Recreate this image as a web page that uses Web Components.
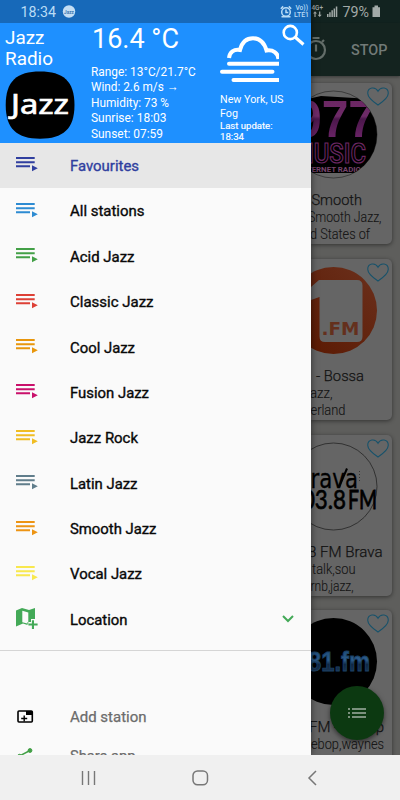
<!DOCTYPE html>
<html lang="en"><head><meta charset="utf-8"><title>Jazz Radio</title>
<style>html,body{margin:0;height:100%;overflow:hidden}body{font-family:Roboto,"Liberation Sans",sans-serif;width:400px;height:800px}</style></head>
<body><radio-app></radio-app>
<script>
const define=(name,css,html)=>customElements.define(name,class extends HTMLElement{
  constructor(){super();this.attachShadow({mode:'open'});}
  connectedCallback(){
    const t=document.createElement('template');
    t.innerHTML=`<style>*{box-sizing:border-box}svg{display:block;overflow:visible}${css}</style>`+(typeof html==='function'?html(this):html);
    this.shadowRoot.replaceChildren(t.content.cloneNode(true));
  }
});

/* A line of text stretched to a given advance width */
define('fit-text',':host{display:block;line-height:0}text{fill:currentColor;stroke:currentColor}',
 e=>{const s=+e.getAttribute('size'),w=e.getAttribute('w'),h=e.getAttribute('h')||Math.round(s*1.2);
 return `<svg width="${w}" height="${h}"><text x="0" y="${h*.78}" font-size="${s}" stroke-width="${e.getAttribute('heft')||0}" textLength="${w}" lengthAdjust="spacingAndGlyphs">${e.textContent}</text></svg>`});

define('status-left',`:host{display:block;height:23px;background:#1769b9;color:#b9dcf6}`,
 `<svg width="311" height="23" fill="currentColor"><text x="20.500" y="17" font-size="14.300" textLength="35.500" lengthAdjust="spacingAndGlyphs">18:34</text>
 <circle cx="69" cy="11.500" r="6.200" fill="#c4def4"/><text x="64" y="13.600" font-size="5.500" font-weight="700" fill="#3d79b3" textLength="10" lengthAdjust="spacingAndGlyphs">Jazz</text>
 <g fill="none" stroke="#b9dcf6" stroke-width="1.500"><circle cx="286" cy="12" r="4.300"/><path d="M286 9.500v3h2.300M280.800 8.800l2.400-2.400M291.200 8.800l-2.400-2.400M281.500 16.700h9"/></g>
 <text x="295.500" y="9.500" font-size="6.800" font-weight="500" textLength="12.500" lengthAdjust="spacingAndGlyphs">Vo))</text><text x="294" y="17" font-size="7" font-weight="500" textLength="15" lengthAdjust="spacingAndGlyphs">LTE1</text></svg>`);

define('status-right',`:host{display:block;height:23px;background:#122320;color:#a3aaa8}`,
 `<svg width="89" height="23" fill="currentColor"><text x=".5" y="10" font-size="7" font-weight="500" textLength="11.500" lengthAdjust="spacingAndGlyphs">4G+</text>
 <path d="M4 11.200l2 2.300H4.600V17H3.400v-3.500H2zM8.700 17l-2-2.300h1.400v-3.300h1.200v3.300h1.400zM16 14h1.500v3H16zM18.200 12.200h1.500V17h-1.500zM20.400 10.200h1.500V17h-1.500zM22.600 8.400h1.500V17h-1.500zM24.800 6.600h1.500V17h-1.500z"/>
 <text x="31.500" y="17" font-size="14.300" textLength="26.500" lengthAdjust="spacingAndGlyphs">79%</text><path d="M61.500 7.300h2V5.500h3.500v1.800h2V17h-7.500z"/></svg>`);

define('weather-header',`:host{display:grid;grid-template-columns:91px 129px 91px;height:120px;background:#1e90ff;color:#fff}
 .a{padding:3px 0 0 5px}.b{padding:1px 0 0 0}.b>fit-text{padding-left:1px}.c{padding-top:2px}.rows{padding-top:9.500px}.rows fit-text{margin-bottom:1.500px}.logo{margin-top:1.500px}.place{padding-top:8.500px}`,
 `<div class="a"><fit-text size="18.800" w="39.500" h="22.500">Jazz</fit-text><fit-text size="18.800" w="48" h="21">Radio</fit-text>
 <div class="logo"><svg width="70" height="69"><path d="M35 .5C58 .5 69.500 10 69.500 34S58 67.700 35 67.700.7 58 .7 34 12 .5 35 .5z" fill="#000"/><text x="6" y="43" font-family="Noto Sans" font-size="28" fill="#fff" stroke="#fff" stroke-width=".7" textLength="58" lengthAdjust="spacingAndGlyphs">Jazz</text></svg></div></div>
 <div class="b"><fit-text size="27.500" w="87" h="31">16.4 °C</fit-text>
 <div class="rows"><fit-text size="12.400" w="104.800" h="14">Range: 13°C/21.7°C</fit-text><fit-text size="12.400" w="87.500" h="14">Wind: 2.6 m/s <tspan font-family="DejaVu Sans">→</tspan></fit-text><fit-text size="12.400" w="78" h="14">Humidity: 73 %</fit-text><fit-text size="12.400" w="75.500" h="14">Sunrise: 18:03</fit-text><fit-text size="12.400" w="72" h="14">Sunset: 07:59</fit-text></div></div>
 <div class="c"><svg width="91" height="58" fill="none" stroke="#fff"><clipPath id="v"><path d="M0 0H59V58H0z"/></clipPath><g clip-path="url(#v)" stroke-width="4" ><path d="M9 33C9.500 27 14 24 20 25 22 17 26 13.300 33 13.300S44 17 46.500 25.500C53 24.500 58 28 58.500 34"/><g stroke-linecap="round"><path d="M9 38.700H62M2 46.700H52.500M13.500 55H62"/></g></g><circle cx="70.300" cy="7.500" r="6.600" stroke-width="2.600"/><path d="M75 12l8.500 7.500" stroke-width="3.100"/></svg>
 <div class="place"><fit-text size="10.200" w="63.500" h="14">New York, US</fit-text><fit-text size="10.200" w="18" h="14">Fog</fit-text><fit-text size="9.600" w="52.500" h="11.500" heft=".15">Last update:</fit-text><fit-text size="9.600" w="24" h="11" heft=".15">18:34</fit-text></div></div>`);

define('play-icon',':host{display:block;width:22px}',
 `<svg width="22" height="16" fill="currentColor"><path d="M0 1h18.700v2H0zM0 5.200h18.700v2H0zM0 9.300h14v2H0zM16 9.200l5.800 3L16 15.200z"/></svg>`);

define('menu-item',`:host{display:flex;height:45.4px;align-items:center;padding:1.500px 0 0 16px;color:#000}
 :host([active]){background:#e7e7e7}.i{width:54px;padding-bottom:4px}.r{margin-left:auto;padding-right:17px}`,
 e=>`<div class="i" style="color:${e.getAttribute('tint')}"><slot name="icon"><play-icon></play-icon></slot></div>
 <fit-text size="14.400" heft=".35" h="17" w="${e.getAttribute('w')}" style="color:${e.hasAttribute('active')?'#303f9f':'#080808'}">${e.getAttribute('label')}</fit-text><div class="r"><slot name="end"></slot></div>`);

define('nav-drawer',`:host{display:flex;flex-direction:column;width:311px;height:755px;overflow:hidden;background:#fafafa;position:relative;z-index:1;box-shadow:0 0 7px #0008}
 .line{height:1px;background:#d5d5d5;margin-top:8px;flex:none}.low{padding-top:46px}.row{display:flex;height:39.500px;align-items:center;padding-left:17px}.row svg{width:17px;margin-right:36px}menu-item,weather-header,status-left{flex:none}`,
 `<status-left></status-left><weather-header></weather-header>`+
 [['Favourites','#303f9f',69,1],['All stations','#2d8bd2',74.5],['Acid Jazz','#43a047',64.5],['Classic Jazz','#dd4036',83.5],['Cool Jazz','#e8960c',65],['Fusion Jazz','#c9106b',79],['Jazz Rock','#f0bd23',68],['Latin Jazz','#607d8b',67.5],['Smooth Jazz','#ed9413',86.5],['Vocal Jazz','#f8e84e',72]].map(([l,c,w,a])=>`<menu-item label="${l}" tint="${c}" w="${w}" ${a?'active':''}></menu-item>`).join('')+
 `<menu-item label="Location" tint="#43a957" w="57.500"><svg slot="icon" width="22" height="20" fill="currentColor"><path d="M0 2.500L6 0l7 2 6-2V11h-4v3h-3.500v3L7 15.500 0 18.500zM6.300 2.700v11.500l6 1.600V4.500z" fill-rule="evenodd"/><path d="M15.900 12.300H18v3.200h3.600v2.100H18v3.500h-2.100v-3.500h-3.500v-2.100h3.500z"/></svg>
 <svg slot="end" width="12" height="8" fill="none" stroke="#43a957" stroke-width="2"><path d="M1 0l5 5 5-5"/></svg></menu-item>
 <div class="line"></div><div class="low"><div class="row"><svg width="17" height="14"><rect x="1" y="1" width="14.300" height="11" rx="1" fill="none" stroke="#000" stroke-width="1.600"/><path d="M9 1h6.300v4H9zM6.500 5.500h1.400v2.300h2.300v1.400H7.900v2.300H6.500V9.200H4.200V7.800h2.300z"/></svg><fit-text size="14.400" w="76.500" h="17" heft=".25" style="color:#6c6c6c">Add station</fit-text></div>
 <div class="row"><svg width="17" height="17" fill="#43a047" stroke="#43a047"><path d="M13 2.500L2.500 8 13 14" fill="none" stroke-width="1.500"/><circle cx="13" cy="2.500" r="1.900"/><circle cx="2.500" cy="8" r="1.700"/><circle cx="13" cy="14" r="1.900"/></svg><fit-text size="14.400" w="65.500" h="17" heft=".25" style="color:#6c6c6c">Share app</fit-text></div></div>`);

define('heart-icon',':host{display:block}',`<svg width="22" height="19" viewBox="0 0 24 20.500" fill="#666" stroke="#17526b" stroke-width="1.200"><path d="M12 19.500C6 15.500.8 11.500.8 6.700.8 0 9-1 12 4.500 15-1 23.200 0 23.200 6.700 23.200 11.500 18 15.500 12 19.500z"/></svg>`);

define('station-card',`:host{display:block;height:161px;width:81px;background:#656565;border-radius:0 5px 5px 0;box-shadow:0 1px 4px #0007;flex:none;position:relative}
 .pic{height:108px}heart-icon{position:absolute;right:3.500px;top:4px}`,
 e=>{const l=JSON.parse(e.getAttribute('lines'));return `<div class="pic"><slot></slot></div><heart-icon></heart-icon><div class="t"><svg width="81" height="50" fill="#131313">${l.map((x,i)=>`<text x="${x[1]}" y="${[13.5,30.5,47.5][i]}" font-size="${i?14:15.3}" font-weight="300" stroke="#131313" stroke-width="${i?.1:.25}" textLength="${x[2]}" lengthAdjust="spacingAndGlyphs">${x[0]}</text>`).join('')}</svg></div>`});

const logos=[
`<defs><clipPath id="c"><circle cx="22.500" cy="51.500" r="43.500"/></clipPath><linearGradient id="g" x2="0" y2="1"><stop stop-color="#69245f"/><stop offset=".45" stop-color="#6e2b68"/><stop offset=".5" stop-color="#4b174b"/><stop offset="1" stop-color="#7b2a75"/></linearGradient></defs><circle cx="22.500" cy="51.500" r="43.500" fill="#656565" stroke="#292929" stroke-width=".7"/><g clip-path="url(#c)"><path d="M-20 20L10 13l50 3 8 22v52H0z" fill="#000"/><text x="-16" y="54" font-family="Liberation Sans" font-weight="700" font-size="52" fill="url(#g)" textLength="80" lengthAdjust="spacingAndGlyphs">977</text><text x="-18" y="79.500" font-family="Roboto" font-size="28" font-weight="500" fill="#000" stroke="#6c2763" stroke-width="1.200" textLength="73" lengthAdjust="spacingAndGlyphs">MUSIC</text><text x="-12" y="88.500" font-size="7" font-weight="700" fill="#744369" textLength="62" lengthAdjust="spacingAndGlyphs">INTERNET RADIO</text></g>`,
`<defs><linearGradient id="g" x1="1" x2="0" y2="1"><stop stop-color="#6b301c"/><stop offset="1" stop-color="#591700"/></linearGradient></defs><circle cx="22.500" cy="51.500" r="43.500" fill="url(#g)"/><path d="M0 28L8 21h38q5.500 0 5.500 5.500v51q0 5.500-5.500 5.500H14q-5.500 0-5.500-5.500V38L0 41z" fill="#656565"/><text x="10.500" y="76" font-family="DejaVu Sans" font-size="18.500" font-weight="700" fill="#64301d" textLength="38" lengthAdjust="spacingAndGlyphs">.FM</text>`,
`<circle cx="22.500" cy="51.500" r="43.500" fill="#656565" stroke="#252525" stroke-width=".8"/><text x="-14" y="53" font-family="DejaVu Sans" font-size="26" fill="#000" stroke="#000" stroke-width=".3" textLength="61" lengthAdjust="spacingAndGlyphs">brava</text><path d="M28 52l8-18.500" stroke="#000" stroke-width="2"/><text x="-22" y="74" font-family="Lato" font-size="27.500" fill="#000" stroke="#000" stroke-width=".7" textLength="57" lengthAdjust="spacingAndGlyphs">103.8</text><text x="37" y="74" font-family="Lato" font-size="27.500" fill="#000" stroke="#000" stroke-width=".9" textLength="29" lengthAdjust="spacingAndGlyphs">FM</text><path d="M48.500 36v12" stroke="#333" stroke-dasharray="1 2"/>`,
`<defs><linearGradient id="g" x2="0" y2="1"><stop stop-color="#16446f"/><stop offset=".45" stop-color="#2d5c8c"/><stop offset=".6" stop-color="#102743"/><stop offset="1" stop-color="#213d5b"/></linearGradient></defs><circle cx="22.500" cy="51.500" r="43.500" fill="#000"/><text x="-3" y="60.500" font-family="Liberation Sans" font-size="27" font-weight="700" fill="url(#g)" stroke="#1c4165" stroke-width=".9" textLength="62" lengthAdjust="spacingAndGlyphs">81.fm</text>`];
const lines=[
 [['Smooth',.5,50.5],['Smooth Jazz,',-3,73.5],['d States of',-1,60]],
 [['- Bossa',5,48],['azz,',-1,22.5],['erland',-.5,35]],
 [['8 FM Brava',-3,74.5],['talk,sou',1,43.5],['rnb,jazz,',-.5,43]],
 [['FM - Bebop',-2,75],['ebop,waynes',0,73]]];

define('station-list',`:host{display:flex;flex-direction:column;width:89px;height:755px;overflow:hidden;background:#5e5e5c}
 .bar{height:53px;flex:none;background:#14231f;box-shadow:0 1px 3px #0006}.cards{display:flex;flex-direction:column;gap:14.800px;padding-top:7px}`,
 `<status-right></status-right><div class="bar"><svg width="89" height="52"><g fill="none" stroke="#636d69" stroke-width="2.200"><circle cx="5" cy="27" r="9"/><path d="M5 21.500v7M1.500 15h7M11 19l2-2"/></g><text x="40" y="32" font-size="15.500" font-weight="500" fill="#727a77" textLength="36.500" lengthAdjust="spacingAndGlyphs">STOP</text></svg></div>
 <div class="cards">${lines.map((l,i)=>`<station-card lines='${JSON.stringify(l)}'><svg width="81" height="108" style="display:block;overflow:visible">${logos[i].replaceAll('id="g"','id="g'+i+'"').replaceAll('#g)','#g'+i+')')}</svg></station-card>`).join('')}</div>`);

define('list-button',`:host{display:flex;width:54px;height:54px;border-radius:50%;background:#0c3911;align-items:center;justify-content:center;box-shadow:0 2px 5px #0008}`,
 `<svg width="18" height="12" fill="#7b917d"><path d="M0 1h2v2H0zM0 5h2v2H0zM0 9h2v2H0zM4 1h14v2H4zM4 5h14v2H4zM4 9h14v2H4z"/></svg>`);

define('system-nav',`:host{display:grid;grid-template-columns:repeat(3,112px);justify-content:center;height:45px;background:#f0f0f0;align-items:center;justify-items:center}`,
 `<svg width="16" height="16" stroke="#777" stroke-width="1.400"><path d="M2.500 1v14M8.500 1v14M14.500 1v14"/></svg><svg width="16" height="16" fill="none" stroke="#777" stroke-width="1.500"><rect x="1" y="1" width="14.500" height="13.800" rx="4.500"/></svg><svg width="16" height="16" fill="none" stroke="#777" stroke-width="1.500"><path d="M12 1L5 8l7 7"/></svg>`);

define('radio-app',`:host{display:block;width:400px;height:800px;position:relative;overflow:hidden}.main{display:flex}list-button{position:absolute;left:330px;top:686px}system-nav{position:relative;z-index:2}`,
 `<div class="main"><nav-drawer></nav-drawer><station-list></station-list></div><list-button></list-button><system-nav></system-nav>`);
</script></body></html>
